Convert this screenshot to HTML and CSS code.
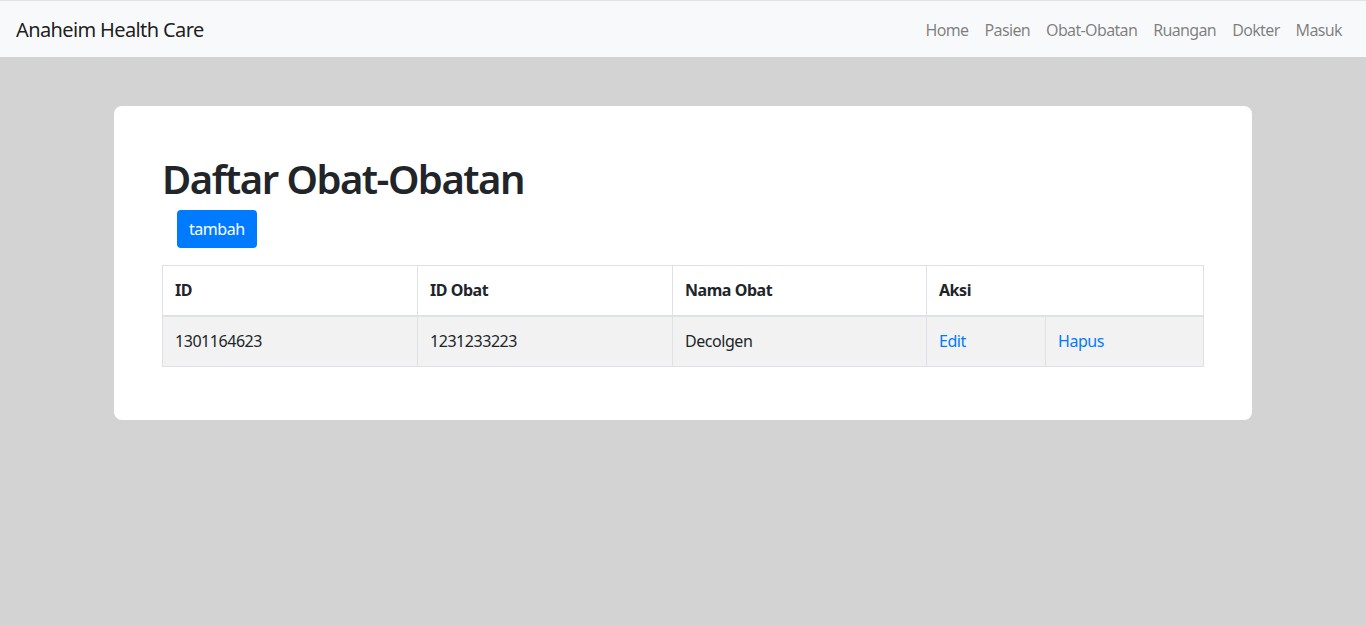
FILE: index.html
```html
<!DOCTYPE html>
<html lang="id">
<head>
<meta charset="utf-8">
<title>Anaheim Health Care</title>
<link rel="stylesheet" href="styles.css">
</head>
<body>
<nav class="navbar">
  <a class="brand" href="#">Anaheim Health Care</a>
  <ul class="nav">
    <li><a href="#">Home</a></li>
    <li><a href="#">Pasien</a></li>
    <li><a href="#">Obat-Obatan</a></li>
    <li><a href="#">Ruangan</a></li>
    <li><a href="#">Dokter</a></li>
    <li><a href="#">Masuk</a></li>
  </ul>
</nav>
<main class="container">
  <section class="jumbotron">
    <h1 class="title">Daftar Obat-Obatan</h1>
    <div class="actions"><a class="btn" href="#">tambah</a></div>
    <table class="table">
      <colgroup>
        <col class="c-id"><col class="c-idobat"><col class="c-nama"><col class="c-edit"><col class="c-hapus">
      </colgroup>
      <thead>
        <tr><th>ID</th><th>ID Obat</th><th>Nama Obat</th><th colspan="2">Aksi</th></tr>
      </thead>
      <tbody>
        <tr><td>1301164623</td><td>1231233223</td><td>Decolgen</td><td><a href="#">Edit</a></td><td><a href="#">Hapus</a></td></tr>
      </tbody>
    </table>
  </section>
</main>
</body>
</html>
```
FILE: styles.css
```css
* { box-sizing: border-box; }
html, body { margin: 0; padding: 0; }
body {
  background: #d3d3d3;
  font-family: "Noto Sans", "Open Sans", sans-serif;
  font-size: 16px;
  line-height: 1.5;
  color: #212529;
  letter-spacing: -0.45px;
}
a { text-decoration: none; color: #007bff; }
.navbar {
  display: flex;
  align-items: center;
  justify-content: space-between;
  background: #f8f9fa;
  border-top: 1px solid #dee2e6;
  height: 57px;
  padding: 1px 16px 0;
}
.brand {
  font-size: 20px;
  line-height: 30px;
  color: rgba(0,0,0,.9);
  letter-spacing: -0.62px;
}
.nav {
  display: flex;
  list-style: none;
  margin: 0;
  padding: 0;
}
.nav a {
  display: block;
  padding: 8px 8px;
  color: rgba(0,0,0,.5);
  font-size: 16px;
  letter-spacing: -0.64px;
}
.container {
  width: 1138px;
  margin: 49px auto 0;
}
.jumbotron {
  background: #fff;
  border-radius: 8px;
  padding: 49px 48px 37px;
}
.title {
  margin: 0 0 7px;
  font-size: 40px;
  font-weight: 600;
  line-height: 48px;
  letter-spacing: -1.5px;
}
.actions { padding-left: 15px; margin-bottom: 17px; }
.btn {
  display: inline-block;
  background: #007bff;
  color: #fff;
  border-radius: 4px;
  padding: 6px 12px;
  line-height: 26px;
  font-size: 16px;
}
.table {
  width: 100%;
  border-collapse: collapse;
  table-layout: fixed;
  margin-bottom: 16px;
}
.c-id, .c-idobat { width: 255px; }
.c-nama { width: 254px; }
.c-edit { width: 119px; }
.table th, .table td {
  border: 1px solid #dee2e6;
  padding: 12px;
  text-align: left;
  vertical-align: top;
  line-height: 25px;
}
.table th { font-weight: 700; }
.table thead th { border-bottom: 2px solid #dee2e6; }
.table tbody tr { background: #f2f2f2; }
```
